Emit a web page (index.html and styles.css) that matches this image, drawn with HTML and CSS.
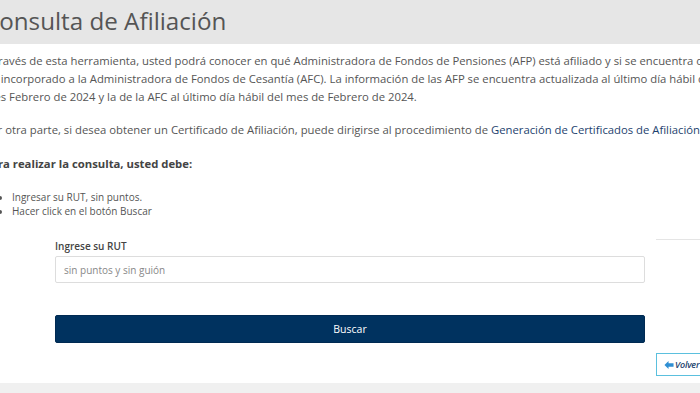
FILE: index.html
```html
<!DOCTYPE html>
<html>
<head>
    <title>Consulta de Afiliación</title>
    <link rel="stylesheet" href="styles.css">
</head>
<body>
    <div class="page">
        <div class="title-bar">
            <h1>Consulta de Afiliación</h1>
        </div>
        <div class="content">
            <p>A través de esta herramienta, usted podrá conocer en qué Administradora de Fondos de Pensiones (AFP) está afiliado y si se encuentra o no incorporado a la Administradora de Fondos de Cesantía (AFC). La información de las AFP se encuentra actualizada al último día hábil del mes Febrero de 2024 y la de la AFC al último día hábil del mes de Febrero de 2024.</p>
            <p>Por otra parte, si desea obtener un Certificado de Afiliación, puede dirigirse al procedimiento de <a href="#">Generación de Certificados de Afiliación</a>.</p>
            <p class="lead">Para realizar la consulta, usted debe:</p>
            <ul class="steps">
                <li>Ingresar su RUT, sin puntos.</li>
                <li>Hacer click en el botón Buscar</li>
            </ul>

            <div class="form-row">
                <form class="rut-form">
                    <label for="rut">Ingrese su RUT</label>
                    <input type="text" id="rut" placeholder="sin puntos y sin guión">
                    <button type="button" class="btn-buscar">Buscar</button>
                </form>
                <div class="side"></div>
            </div>

            <div class="back-row">
                <a href="#" class="btn-volver">
                    <svg width="10" height="10" viewBox="0 0 11 10"><path d="M0.5 5 L5 0.6 L5 3.2 L10.5 3.2 L10.5 6.8 L5 6.8 L5 9.4 Z" fill="#2f8fd3"/></svg>
                    Volver
                </a>
            </div>
        </div>
    </div>
    <footer class="footer"></footer>
</body>
</html>
```

FILE: styles.css
```css
body {
    margin: 0;
    padding: 0;
    font-family: 'Open Sans', sans-serif;
    color: #555;
    background-color: #fff;
    overflow: hidden;
    height: 393px;
}

.page {
    width: 960px;
    margin-left: -16px;
}

.title-bar {
    background-color: #e6e6e6;
    height: 44px;
    display: flex;
    align-items: center;
}

.title-bar h1 {
    margin: 0;
    font-size: 24.2px;
    font-weight: 400;
    color: #555;
    padding-bottom: 4px;
}

.content {
    padding-top: 8px;
}

.content p {
    font-size: 11.3px;
    line-height: 18px;
    margin: 0 0 15px 0;
    width: 733px;
}

.content a {
    color: #1d3f6e;
    text-decoration: none;
}

.content p.lead {
    font-weight: 700;
    color: #444;
    margin-top: 16px;
    margin-bottom: 17px;
}

.steps {
    margin: 0;
    padding-left: 28px;
    font-size: 10px;
    line-height: 14px;
}

.form-row {
    display: flex;
    margin-top: 21px;
}

.rut-form {
    width: 590px;
    margin-left: 71px;
    display: flex;
    flex-direction: column;
}

.rut-form label {
    font-size: 10px;
    font-weight: 600;
    color: #444;
    margin-bottom: 3px;
}

.rut-form input {
    height: 27px;
    box-sizing: border-box;
    border: 1px solid #ddd;
    border-radius: 2px;
    padding: 0 8px;
    font-family: 'Open Sans', sans-serif;
    font-size: 10px;
    color: #555;
}

.rut-form input::placeholder {
    color: #888;
}

.btn-buscar {
    margin-top: 32px;
    height: 28px;
    background-color: #00325f;
    border: 1px solid #002a52;
    border-radius: 2px;
    color: #fff;
    font-family: 'Open Sans', sans-serif;
    font-size: 10.5px;
}

.side {
    margin-left: 11px;
    margin-top: 0;
    width: 200px;
    border-top: 1px solid #e5e5e5;
    height: 0;
}

.back-row {
    display: flex;
    padding-left: 672px;
    margin-top: 10px;
}

.btn-volver {
    display: flex;
    align-items: center;
    gap: 1px;
    height: 23px;
    box-sizing: border-box;
    padding: 0 6px 0 7px;
    border: 1px solid #5bc0de;
    font-size: 9px;
    letter-spacing: -0.2px;
    font-style: italic;
    font-weight: 600;
    color: #1d3f6e;
    text-decoration: none;
}

.footer {
    position: fixed;
    left: 0;
    right: 0;
    bottom: 0;
    height: 10px;
    background-color: #f0f0f0;
}
```
